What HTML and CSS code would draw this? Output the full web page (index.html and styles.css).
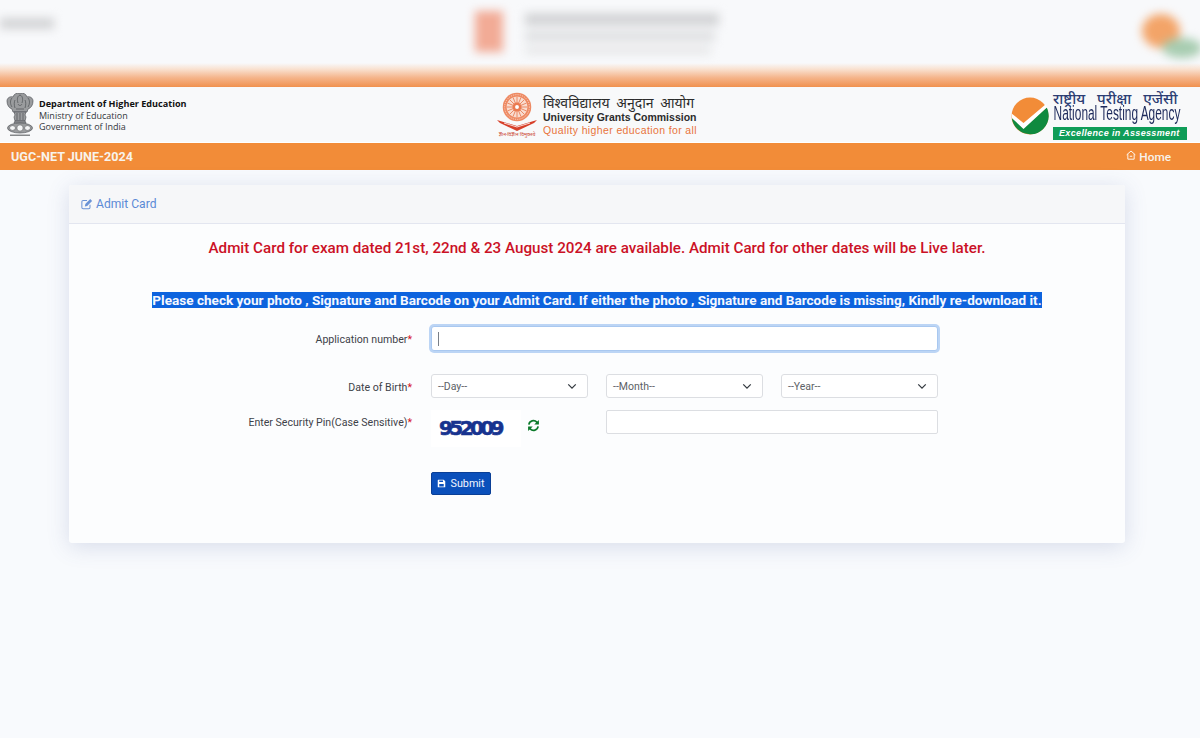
FILE: index.html
```html
<!DOCTYPE html>
<html lang="en">
<head>
<meta charset="utf-8">
<title>UGC-NET JUNE-2024 Admit Card</title>
<link rel="stylesheet" href="styles.css">
</head>
<body>
<div class="ghost">
  <div class="ghost-blobs">
    <div class="blob blob-left"></div>
    <div class="ghost-mid">
      <div class="blob blob-emblem"></div>
      <div class="ghost-lines">
        <div class="blob blob-line1"></div>
        <div class="blob blob-line2"></div>
        <div class="blob blob-line3"></div>
      </div>
    </div>
    <div class="ghost-nta">
      <div class="blob blob-orange"></div>
      <div class="blob blob-green"></div>
    </div>
  </div>
  <div class="ghost-bar"></div>
</div>

<header class="brand">
  <div class="brand-left">
    <svg class="emblem" viewBox="0 0 28 44" aria-hidden="true">
      <g fill="#9a9c9e" stroke="#55585b" stroke-width=".7">
        <path d="M1 8c0-3 3-5 6-4 1-3 3-4 7-4s6 1 7 4c3-1 6 1 6 4 0 4-2 7-5 8l-1 3H7l-1-3C3 15 1 12 1 8z"/>
        <path d="M8 19h12l-1 3 1 2-1 4H9l-1-4 1-2z"/>
        <path d="M9 28h10l1 2H8z"/>
        <ellipse cx="14" cy="35" rx="12.500" ry="5"/>
      </g>
      <g fill="none" stroke="#4e5154" stroke-width=".7">
        <path d="M6 5c-2 2-2 6 0 9M9 7c-1 2-1 5 0 8M14 2c-3 1-3 5-2 8M14 2c3 1 3 5 2 8M12 11c1 2 3 2 4 0M19 7c1 2 1 5 0 8M22 5c2 2 2 6 0 9M10 16h8M11 20v7M14 20v7M17 20v7"/>
      </g>
      <g fill="#f4f5f6" stroke="#55585b" stroke-width=".6">
        <circle cx="14" cy="35" r="3.200"/>
        <ellipse cx="6.500" cy="35" rx="3" ry="2.400"/>
        <ellipse cx="21.500" cy="35" rx="3" ry="2.400"/>
      </g>
      <rect x="4" y="41.500" width="20" height="1.500" fill="#85888a"/>
    </svg>
    <div class="dept">
      <div class="dept-main">Department of Higher Education</div>
      <div>Ministry of Education</div>
      <div>Government of India</div>
    </div>
  </div>
  <div class="brand-mid">
    <div class="ugc-logo">
      <svg class="wheel" viewBox="0 0 40 40" aria-hidden="true">
        <circle cx="20" cy="20" r="19" fill="#ee8a63"/>
        <circle cx="20" cy="20" r="16.500" fill="none" stroke="#fbe3d8" stroke-width="1" stroke-dasharray="1.500 1.500"/>
        <circle cx="20" cy="20" r="14" fill="#f9dccf"/>
        <g stroke="#e9805a" stroke-width="1.200">
          <path d="M20 6v28M6 20h28M10.100 10.100l19.800 19.800M29.900 10.100 10.100 29.900M14.600 7l10.800 26M25.400 7 14.600 33M7 14.600l26 10.800M7 25.400l26-10.800"/>
        </g>
        <circle cx="20" cy="20" r="6" fill="#ea7a50"/>
        <circle cx="20" cy="20" r="2.600" fill="#fff"/>
      </svg>
      <svg class="book" viewBox="0 0 40 11" aria-hidden="true">
        <path d="M0 0l20 6 20-6-3 3-17 8L3 3z" fill="#d7402a"/>
        <path d="M7 3l13 4 13-4" fill="none" stroke="#fff" stroke-width=".8"/>
      </svg>
      <div class="ugc-tag" lang="hi">ज्ञान-विज्ञान विमुक्तये</div>
    </div>
    <div class="ugc-text">
      <div class="ugc-hindi" lang="hi">विश्वविद्यालय अनुदान आयोग</div>
      <div class="ugc-en">University Grants Commission</div>
      <div class="ugc-quality">Quality higher education for all</div>
    </div>
  </div>
  <div class="brand-right">
    <svg class="nta-mark" viewBox="0 0 38 38" aria-hidden="true">
      <circle cx="19" cy="19" r="18.500" fill="#f28c38"/>
      <path d="M.8 20.500a18.500 18.500 0 0 0 36.900-1c0-3.500-.7-6.500-2-9L12.500 31z" fill="#0f8a3f"/>
      <path d="M.6 16.500 12.500 26 34.500 7.500l1.600 2.800L12.500 32 .8 21z" fill="#fff"/>
    </svg>
    <div class="nta-text">
      <div class="nta-hindi" lang="hi">राष्ट्रीय परीक्षा एजेंसी</div>
      <div class="nta-en">National Testing Agency</div>
      <div class="nta-tag">Excellence in Assessment</div>
    </div>
  </div>
</header>

<nav class="navbar">
  <span class="nav-title">UGC-NET JUNE-2024</span>
  <a class="nav-home">
    <svg class="home-icon" viewBox="0 0 12 12" aria-hidden="true">
      <path d="M.8 5.800 6 1.200l5.200 4.600M2.200 5v6h7.600V5M4.500 7.500h3" fill="none" stroke="#fff" stroke-width="1.100"/>
    </svg>
    Home
  </a>
</nav>

<main class="card">
  <div class="card-head">
    <svg class="edit-icon" viewBox="0 0 14 13" aria-hidden="true">
      <path d="M10.500 7.500v3a1.500 1.500 0 0 1-1.500 1.500H2.500A1.500 1.500 0 0 1 1 10.500V4a1.500 1.500 0 0 1 1.500-1.500H7" fill="none" stroke="#6a93d6" stroke-width="1.200"/>
      <path d="M5 6.500 10.800 .8l2.200 2.200L7.200 8.800l-2.700.5z" fill="#6a93d6"/>
    </svg>
    Admit Card
  </div>
  <div class="card-body">
    <p class="notice">Admit Card for exam dated 21st, 22nd &amp; 23 August 2024 are available. Admit Card for other dates will be Live later.</p>
    <p class="selected-line"><span>Please check your photo , Signature and Barcode on your Admit Card. If either the photo , Signature and Barcode is missing, Kindly re-download it.</span></p>
    <form class="form">
      <label class="label label-app">Application number<em>*</em></label>
      <div class="app-field"><span class="caret"></span></div>

      <label class="label label-dob">Date of Birth<em>*</em></label>
      <div class="triple dob-row">
        <div class="select">--Day--<svg viewBox="0 0 12 8"><path d="M1.500 1.500 6 6l4.500-4.500" fill="none" stroke="#343a40" stroke-width="1.500"/></svg></div>
        <div class="select">--Month--<svg viewBox="0 0 12 8"><path d="M1.500 1.500 6 6l4.500-4.500" fill="none" stroke="#343a40" stroke-width="1.500"/></svg></div>
        <div class="select">--Year--<svg viewBox="0 0 12 8"><path d="M1.500 1.500 6 6l4.500-4.500" fill="none" stroke="#343a40" stroke-width="1.500"/></svg></div>
      </div>

      <label class="label label-pin">Enter Security Pin(Case Sensitive)<em>*</em></label>
      <div class="pin-row">
        <div class="captcha-wrap">
          <div class="captcha">952009</div>
          <svg class="refresh" viewBox="0 0 14 14" aria-hidden="true">
            <path d="M2 6a5 5 0 0 1 8.600-2.600L12 5M12 8a5 5 0 0 1-8.600 2.600L2 9" fill="none" stroke="#0b7a2a" stroke-width="1.800"/>
            <path d="M12.800 1v5h-5zM1.200 13V8h5z" fill="#0b7a2a"/>
          </svg>
        </div>
        <div class="pin-input"></div>
      </div>

      <div class="submit-cell">
        <button class="submit" type="button">
          <svg viewBox="0 0 12 12" aria-hidden="true"><path d="M1.500 1h7.500l2 2v7.500a.5.5 0 0 1-.5.500h-9a.5.5 0 0 1-.5-.5v-9a.5.5 0 0 1 .5-.5zM3 6.500h6V10H3zM3 2h5v2H3z" fill="#fff" fill-rule="evenodd"/></svg>
          Submit
        </button>
      </div>
    </form>
  </div>
</main>
</body>
</html>
```
FILE: styles.css
```css
* { box-sizing: border-box; }
html, body { margin: 0; padding: 0; }
body {
  width: 1200px;
  height: 738px;
  overflow: hidden;
  background: #f8fafd;
  font-family: Roboto, "Noto Sans", sans-serif;
  color: #3a3b45;
}

/* blurred ghost of the banner */
.ghost { height: 87px; display: flex; flex-direction: column; background: #f8f9fb; overflow: hidden; }
.ghost-blobs { height: 63px; flex: none; display: flex; align-items: flex-start; filter: blur(5px); }
.blob-left { width: 54px; height: 11px; margin: 18px 0 0 0; background: #d2d3d5; flex: none; }
.ghost-mid { display: flex; margin-left: 421px; gap: 22px; margin-top: 11px; }
.blob-emblem { width: 28px; height: 41px; background: #f2ab96; }
.ghost-lines { display: flex; flex-direction: column; gap: 6px; padding-top: 2px; }
.blob-line1 { width: 194px; height: 13px; background: #d3d4d6; }
.blob-line2 { width: 190px; height: 9px; background: #dcdddf; }
.blob-line3 { width: 186px; height: 7px; background: #e4e5e6; }
.ghost-nta { margin-left: 423px; margin-top: 14px; width: 60px; display: flex; flex-direction: column; }
.blob-orange { width: 38px; height: 34px; border-radius: 50%; background: #f3a468; }
.blob-green { width: 40px; height: 20px; border-radius: 50%; background: #a7ccb0; margin-left: 20px; margin-top: -10px; }
.ghost-bar { height: 24px; flex: none; background: linear-gradient(#f8f9fb 0%, #f9e2d1 25%, #f5b68d 60%, #f0914e 100%); }

/* brand strip */
.brand {
  height: 56px;
  display: grid;
  grid-template-columns: 1fr 1fr 1fr;
  background: #f8f9fa;
  border-bottom: 1px solid #fff;
}
.brand-left { display: flex; align-items: flex-start; padding: 6px 0 0 6px; gap: 5px; }
.emblem { width: 28px; height: 44px; flex: none; }
.dept { font-family: "Open Sans", sans-serif; font-size: 9px; line-height: 11.500px; color: #33373a; padding-top: 5px; white-space: nowrap; }
.dept-main { font-weight: 700; color: #111; font-size: 9.100px; }

.brand-mid { display: flex; align-items: flex-start; padding: 5px 0 0 97px; gap: 6px; }
.ugc-logo { width: 40px; display: flex; flex-direction: column; align-items: center; flex: none; }
.wheel { width: 30px; height: 30px; }
.book { width: 40px; height: 11px; margin-top: -2px; }
.ugc-tag { font-size: 5px; line-height: 6px; color: #c9402a; white-space: nowrap; }
.ugc-text { white-space: nowrap; padding-top: 2px; }
.ugc-hindi { font-size: 14px; line-height: 17px; color: #2c2c2c; word-spacing: 3px; font-family: "Noto Sans", "Noto Sans Devanagari", sans-serif; }
.ugc-en { font-family: "Liberation Sans", sans-serif; font-weight: 700; font-size: 10.500px; line-height: 13px; color: #2b2b2b; }
.ugc-quality { font-family: "Liberation Sans", sans-serif; font-size: 10.500px; line-height: 13px; color: #e8743b; letter-spacing: .38px; }

.brand-right { display: flex; justify-content: flex-end; align-items: flex-start; padding: 4px 13px 0 0; gap: 4px; }
.nta-mark { width: 38px; height: 38px; margin-top: 6px; flex: none; }
.nta-text { width: 134px; white-space: nowrap; }
.nta-hindi { font-size: 15px; line-height: 14px; color: #2c3e74; font-weight: 500; word-spacing: 8px; font-family: "Noto Sans", sans-serif; }
.nta-en { font-family: "Liberation Sans", sans-serif; font-size: 19.500px; line-height: 17px; color: #1d2a5b; transform-origin: left center; transform: scaleX(.61); padding-left: 1px; }
.nta-tag { margin-top: 5px; height: 13px; background: #0f9d58; color: #fff; font: italic 700 9px/13px "Liberation Sans", sans-serif; letter-spacing: .35px; padding-left: 6px; }

/* nav */
.navbar {
  height: 27px;
  background: #f28c38;
  color: #f8f3ec;
  display: flex;
  justify-content: space-between;
  align-items: center;
  padding: 0 29px 0 11px;
  font-size: 12.600px;
  font-weight: 700;
}
.nav-home { display: flex; align-items: center; gap: 3px; font-size: 11.800px; font-weight: 500; }
.home-icon { width: 10px; height: 10px; margin-top: -3px; }

/* card */
.card {
  width: 1056px;
  height: 358px;
  margin: 15px 0 0 69px;
  background: #fcfdfe;
  border-radius: 3px;
  box-shadow: 0 4px 22px rgba(70, 90, 150, .18);
  display: flex;
  flex-direction: column;
}
.card-head {
  height: 39px;
  background: #f6f7f9;
  border-bottom: 1px solid #e3e6f0;
  border-radius: 3px 3px 0 0;
  display: flex;
  align-items: center;
  gap: 3px;
  padding-left: 12px;
  font-size: 12.100px;
  font-weight: 400;
  color: #5b8ad6;
}
.edit-icon { width: 12px; height: 12px; margin-top: -1px; }
.card-body { flex: 1; padding-top: 15px; }
.notice {
  margin: 0;
  text-align: center;
  color: #cb1126;
  font-size: 15.200px;
  line-height: 18px;
  font-weight: 500;
}
.selected-line {
  margin: 35px 0 0;
  text-align: center;
  font-size: 13.570px;
  line-height: 16px;
  font-weight: 700;
  color: #f5f8ff;
}
.selected-line span { background: #0d63de; }

/* form */
.form {
  margin-top: 18px;
  display: grid;
  grid-template-columns: 343px 507px;
  column-gap: 19px;
  align-items: start;
}
.label { font-size: 10.600px; line-height: 14px; text-align: right; color: #3e4249; white-space: nowrap; }
.label em { color: #d6132a; font-style: normal; }
.label-app { margin-top: 7px; }
.app-field {
  height: 25px;
  background: #fff;
  border: 1px solid #a9c8f0;
  border-radius: 3px;
  box-shadow: 0 0 0 2px #bcd5f5;
  display: flex;
  align-items: center;
  padding-left: 6px;
}
.caret { width: 1px; height: 14px; background: #7a8088; }
.triple { display: grid; grid-template-columns: repeat(3, 157px); column-gap: 18px; }
.dob-row { margin-top: 23px; grid-column: 2; }
.label-dob { margin-top: 30px; }
.select {
  height: 24px;
  background: #fff;
  border: 1px solid #dcdee2;
  border-radius: 3px;
  font-size: 10.500px;
  color: #5c6166;
  display: flex;
  align-items: center;
  justify-content: space-between;
  padding: 0 10px 0 6px;
}
.select svg { width: 10px; height: 7px; }
.pin-row { display: grid; grid-template-columns: 157px 332px; column-gap: 18px; margin-top: 12px; }
.label-pin { margin-top: 18px; }
.captcha-wrap { display: flex; align-items: flex-start; }
.captcha {
  width: 90px;
  height: 37px;
  background: #fff;
  color: #17338f;
  font-family: "DejaVu Sans", sans-serif;
  font-weight: 700;
  font-size: 20px;
  line-height: 36px;
  padding-left: 8px;
  letter-spacing: -3.600px;
  -webkit-text-stroke: .6px #17338f;
  white-space: nowrap;
}
.refresh { width: 13px; height: 13px; margin: 9px 0 0 6px; }
.pin-input { height: 24px; background: #fff; border: 1px solid #dcdee2; border-radius: 2px; }
.submit-cell { grid-column: 2; margin-top: 25px; }
.submit {
  width: 60px;
  height: 23px;
  padding: 0;
  background: #0b50bb;
  border: 1px solid #0a3f96;
  border-radius: 2px;
  color: #f2f6ff;
  font: 400 10.800px Roboto, sans-serif;
  display: flex;
  align-items: center;
  justify-content: center;
  gap: 4px;
}
.submit svg { width: 9px; height: 9px; }
```
